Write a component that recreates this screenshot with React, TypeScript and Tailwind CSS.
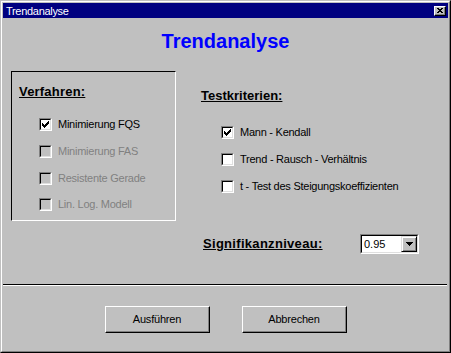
import React from "react";

const Check = () => (
  <svg width="7" height="7" viewBox="0 0 7 7" shapeRendering="crispEdges" className="block">
    <rect x="6" y="0" width="1" height="1" fill="#000" />
    <rect x="5" y="1" width="2" height="1" fill="#000" />
    <rect x="0" y="2" width="1" height="1" fill="#000" />
    <rect x="4" y="2" width="3" height="1" fill="#000" />
    <rect x="0" y="3" width="2" height="1" fill="#000" />
    <rect x="3" y="3" width="3" height="1" fill="#000" />
    <rect x="0" y="4" width="5" height="1" fill="#000" />
    <rect x="1" y="5" width="3" height="1" fill="#000" />
    <rect x="2" y="6" width="1" height="1" fill="#000" />
  </svg>
);

function Box({ checked, disabled }: { checked?: boolean; disabled?: boolean }) {
  return (
    <div className="w-[13px] h-[13px] shrink-0 border border-t-[#808080] border-l-[#808080] border-b-white border-r-white">
      <div
        className={
          "w-full h-full border border-t-black border-l-black border-b-[#dfdfdf] border-r-[#dfdfdf] flex items-center justify-center " +
          (disabled ? "bg-[#c0c0c0]" : "bg-white")
        }
      >
        {checked ? <Check /> : null}
      </div>
    </div>
  );
}

function Item({ label, checked, disabled, cls }: { label: string; checked?: boolean; disabled?: boolean; cls?: string }) {
  return (
    <div className={"flex items-center gap-[6px] h-[13px] " + (cls ?? "")}>
      <Box checked={checked} disabled={disabled} />
      <span
        className={
          "text-[11px] leading-[13px] tracking-[-0.25px] whitespace-nowrap " +
          (disabled ? "text-[#808080]" : "text-black")
        }
      >
        {label}
      </span>
    </div>
  );
}

function Button({ label }: { label: string }) {
  return (
    <div className="w-[105px] h-[27px] border border-t-white border-l-white border-b-black border-r-black shadow-[inset_-1px_-1px_0_#808080] flex items-center justify-center">
      <span className="text-[11px] leading-[13px] tracking-[-0.2px] text-black">{label}</span>
    </div>
  );
}

export default function App() {
  return (
    <div className="w-[451px] h-[353px] bg-[#c0c0c0] border border-t-[#c0c0c0] border-l-[#c0c0c0] border-b-black border-r-black font-['Liberation_Sans',Arial,sans-serif] select-none">
      <div className="h-full border border-t-white border-l-white border-b-[#808080] border-r-[#808080] p-px flex flex-col">
        {/* title bar */}
        <div className="h-[15px] bg-[#000080] flex items-center justify-between pl-[3px] pr-[2px]">
          <span className="text-white text-[11px] leading-[13px] tracking-[-0.3px] pt-px">Trendanalyse</span>
          <div className="w-[12px] h-[10px] bg-[#c0c0c0] border border-t-white border-l-white border-b-black border-r-black shadow-[inset_-1px_-1px_0_#808080] flex items-center justify-center">
            <svg width="6" height="5" viewBox="0 0 6 5" shapeRendering="crispEdges" className="block">
              <rect x="0" y="0" width="2" height="1" fill="#000" />
              <rect x="4" y="0" width="2" height="1" fill="#000" />
              <rect x="1" y="1" width="4" height="1" fill="#000" />
              <rect x="2" y="2" width="2" height="1" fill="#000" />
              <rect x="1" y="3" width="4" height="1" fill="#000" />
              <rect x="0" y="4" width="2" height="1" fill="#000" />
              <rect x="4" y="4" width="2" height="1" fill="#000" />
            </svg>
          </div>
        </div>

        {/* client */}
        <div className="flex-1 flex flex-col">
          <div className="mt-[11px] text-center text-[20px] leading-[24px] font-bold text-[#0000ff]">Trendanalyse</div>

          <div className="mt-[18px] flex">
            <div className="ml-[8px] w-[165px] h-[150px] border border-t-black border-l-black border-b-white border-r-white pl-[7px] pt-[12px]">
              <div className="text-[13px] leading-[16px] font-bold underline text-black tracking-[0.2px]">Verfahren:</div>
              <div className="mt-[18px] ml-[20px] flex flex-col">
                <Item label="Minimierung FQS" checked />
                <Item label="Minimierung FAS" disabled cls="mt-[14px]" />
                <Item label="Resistente Gerade" disabled cls="mt-[14px]" />
                <Item label="Lin. Log. Modell" disabled cls="mt-[13px]" />
              </div>
            </div>

            <div className="ml-[25px] pt-[17px]">
              <div className="text-[13px] leading-[16px] font-bold underline text-black">Testkriterien:</div>
              <div className="mt-[22px] ml-[20px] flex flex-col">
                <Item label="Mann - Kendall" checked />
                <Item label="Trend - Rausch - Verhältnis" cls="mt-[14px]" />
                <Item label="t - Test des Steigungskoeffizienten" cls="mt-[14px]" />
              </div>
            </div>
          </div>

          <div className="mt-[13px] flex items-center pl-[200px]">
            <div className="w-[157px] text-[13px] leading-[16px] font-bold underline text-black tracking-[0.3px]">Signifikanzniveau:</div>
            <div className="w-[59px] h-[20px] border border-t-[#808080] border-l-[#808080] border-b-white border-r-white">
              <div className="w-full h-full border border-t-black border-l-black border-b-[#dfdfdf] border-r-[#dfdfdf] bg-white flex items-center justify-between">
                <span className="pl-[2px] text-[11px] leading-[13px] text-black">0.95</span>
                <div className="w-[16px] h-full bg-[#c0c0c0] border border-t-[#dfdfdf] border-l-[#dfdfdf] border-b-black border-r-black shadow-[inset_1px_1px_0_#fff,inset_-1px_-1px_0_#808080] flex items-center justify-center">
                  <svg width="7" height="4" viewBox="0 0 7 4" shapeRendering="crispEdges" className="block">
                    <rect x="0" y="0" width="7" height="1" fill="#000" />
                    <rect x="1" y="1" width="5" height="1" fill="#000" />
                    <rect x="2" y="2" width="3" height="1" fill="#000" />
                    <rect x="3" y="3" width="1" height="1" fill="#000" />
                  </svg>
                </div>
              </div>
            </div>
          </div>

          <div className="mt-[30px] w-[444px] h-[2px] border-t border-t-black border-b border-b-white" />

          <div className="mt-[20px] flex justify-center gap-[32px]">
            <Button label="Ausführen" />
            <Button label="Abbrechen" />
          </div>
        </div>
      </div>
    </div>
  );
}
